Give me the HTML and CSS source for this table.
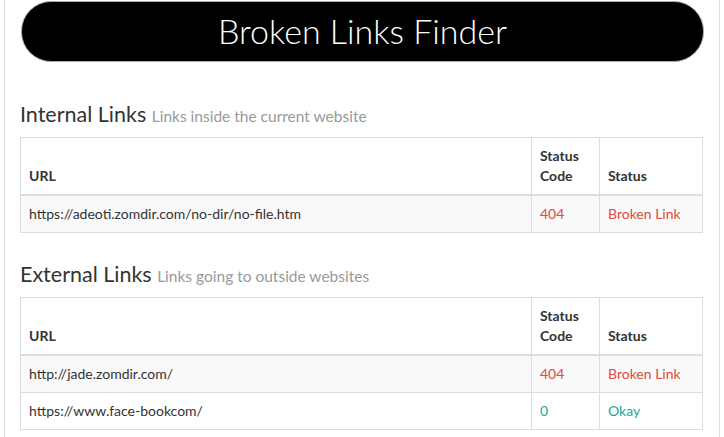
FILE: index.html
```html
<!DOCTYPE html>
<html>
<head>
<meta charset="utf-8">
<link rel="stylesheet" href="styles.css">
</head>
<body>
<div class="container">
  <header class="banner"><h1>Broken Links Finder</h1></header>

  <section class="section first">
    <h3>Internal Links <small>Links inside the current website</small></h3>
    <table class="tbl">
      <thead>
        <tr><th class="c-url">URL</th><th class="c-code">Status Code</th><th class="c-status">Status</th></tr>
      </thead>
      <tbody>
        <tr class="odd"><td>https://adeoti.zomdir.com/no-dir/no-file.htm</td><td class="bad">404</td><td class="bad">Broken Link</td></tr>
      </tbody>
    </table>
  </section>

  <section class="section">
    <h3>External Links <small>Links going to outside websites</small></h3>
    <table class="tbl">
      <thead>
        <tr><th class="c-url">URL</th><th class="c-code">Status Code</th><th class="c-status">Status</th></tr>
      </thead>
      <tbody>
        <tr class="odd"><td>http://jade.zomdir.com/</td><td class="bad">404</td><td class="bad">Broken Link</td></tr>
        <tr><td>https://www.face-bookcom/</td><td class="ok">0</td><td class="ok">Okay</td></tr>
      </tbody>
    </table>
  </section>
</div>
</body>
</html>
```
FILE: styles.css
```css
* { box-sizing: border-box; }
html, body { margin: 0; padding: 0; background: #fff; }
body {
  font-family: "Source Sans Pro", Lato, "Open Sans", sans-serif;
  font-size: 14px;
  line-height: 20px;
  color: #333;
}
.container {
  margin: 0 4px;
  padding: 1px 15px 0;
  border-left: 1px solid #ddd;
  border-right: 1px solid #ddd;
  min-height: 437px;
}
.banner {
  margin: 0 0 0 1px;
  height: 61px;
  background: #000;
  border: 1px solid #aaa;
  border-radius: 30px;
  display: flex;
  align-items: center;
  justify-content: center;
}
.banner h1 {
  margin: 0;
  color: #fff;
  font-family: Lato, sans-serif;
  font-weight: 300;
  font-size: 34px;
  line-height: 40px;
  padding-bottom: 2px;
}
.section h3 {
  margin: 0 0 8px;
  font-size: 21.5px;
  font-weight: 400;
  line-height: 25px;
  color: #333;
}
.section h3 small {
  font-size: 15.5px;
  color: #999;
  font-weight: 400;
}
.section { margin-top: 29px; }
.section.first { margin-top: 40px; }
.tbl {
  width: 683px;
  border-collapse: collapse;
  border: 1px solid #ddd;
}
.tbl th, .tbl td {
  border: 1px solid #ddd;
  padding: 8px;
  text-align: left;
  vertical-align: bottom;
}
.tbl th { font-weight: 700; }
.tbl thead th { border-bottom: 2px solid #ddd; }
.tbl td { vertical-align: top; }
.tbl .odd td { background: #f9f9f9; }
.c-code { width: 68px; }
.c-status { width: 103px; }
.bad { color: #e04a3f; }
.ok { color: #22a79a; }
```
